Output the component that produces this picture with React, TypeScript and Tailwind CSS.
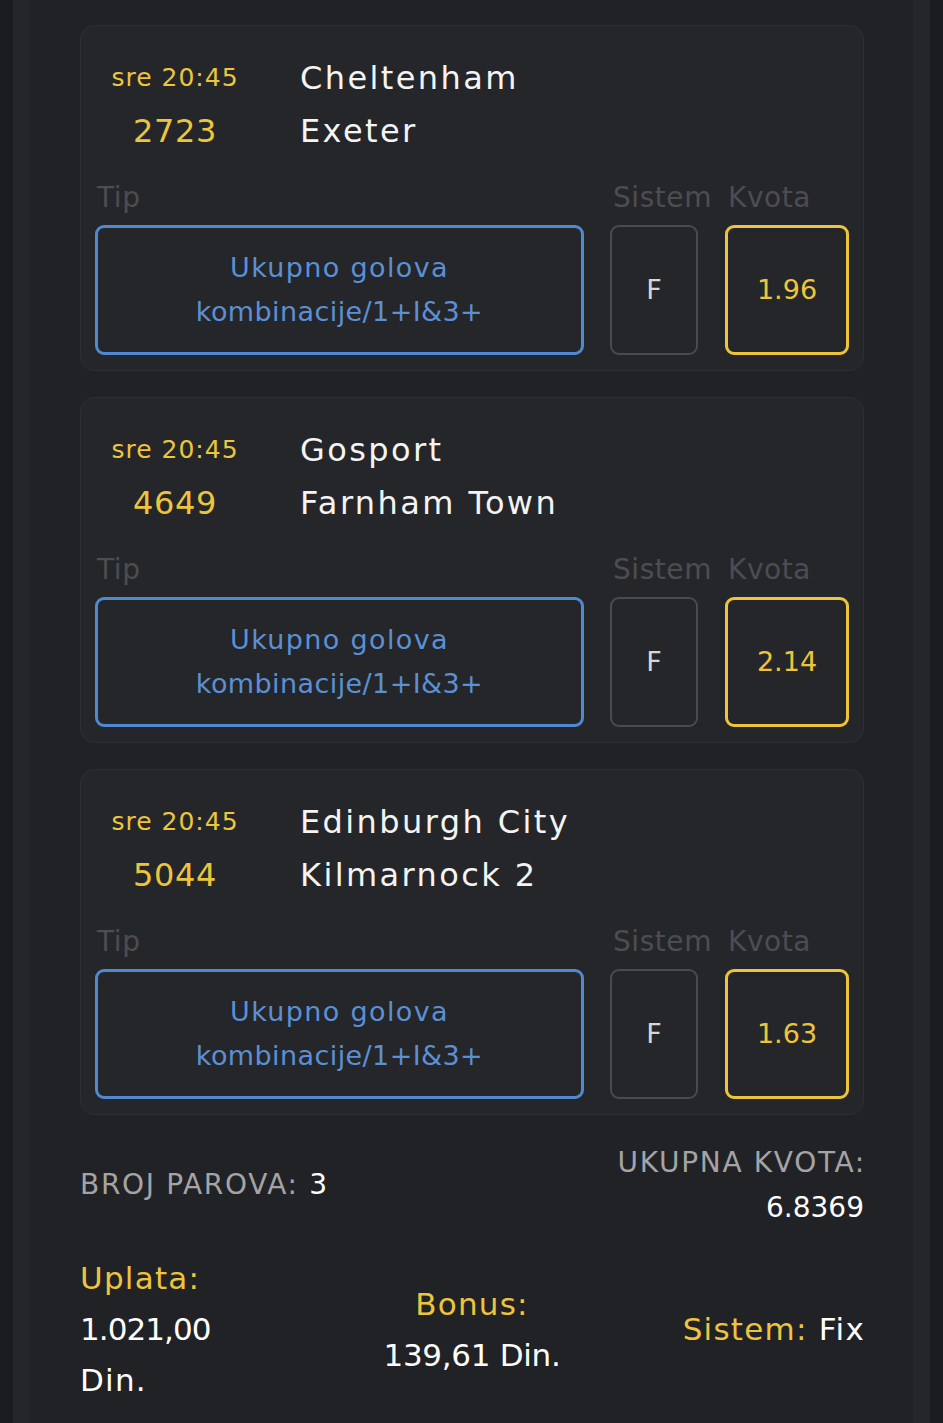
import React from "react";

const FONT = { fontFamily: '"DejaVu Sans", "Noto Sans", sans-serif' };

type Match = { time: string; code: string; home: string; away: string; odd: string };

const matches: Match[] = [
  { time: "sre 20:45", code: "2723", home: "Cheltenham", away: "Exeter", odd: "1.96" },
  { time: "sre 20:45", code: "4649", home: "Gosport", away: "Farnham Town", odd: "2.14" },
  { time: "sre 20:45", code: "5044", home: "Edinburgh City", away: "Kilmarnock 2", odd: "1.63" },
];

function Card({ m }: { m: Match }) {
  return (
    <div className="rounded-[14px] border border-[#2e2f32] bg-[#252629] px-[14px] pt-[25px] pb-[15px]">
      <div className="grid grid-cols-[160px_1fr] gap-x-[45px]">
        <div className="h-[53px] flex items-center justify-center text-[25px] text-[#ecc53d] tracking-[0.04em]">{m.time}</div>
        <div className="h-[53px] flex items-center text-[32px] text-[#f4f4f4] tracking-[0.075em]">{m.home}</div>
        <div className="h-[53px] flex items-center justify-center text-[32px] text-[#ecc53d] tracking-[0.02em]">{m.code}</div>
        <div className="h-[53px] flex items-center text-[32px] text-[#f4f4f4] tracking-[0.075em]">{m.away}</div>
      </div>
      <div className="mt-[22px] flex h-[38px] items-center text-[28px] text-[#4c4d51] tracking-[0.02em] whitespace-nowrap">
        <div className="w-[489px] pl-[2px]">Tip</div>
        <div className="ml-[26px] w-[88px] pl-[3px]">Sistem</div>
        <div className="ml-[27px] w-[124px] pl-[3px]">Kvota</div>
      </div>
      <div className="mt-[8px] flex h-[130px]">
        <div className="w-[489px] rounded-[9px] border-[3px] border-[#5089cf] flex flex-col items-center justify-center text-[27px] leading-[44px] text-[#5b90d4] tracking-[0.015em]">
          <div className="tracking-[0.05em]">Ukupno golova</div>
          <div>kombinacije/1+I&amp;3+</div>
        </div>
        <div className="ml-[26px] w-[88px] rounded-[9px] border-[2px] border-[#4a4b4f] flex items-center justify-center text-[27px] text-[#d6d6d6]">
          F
        </div>
        <div className="ml-[27px] w-[124px] rounded-[9px] border-[3px] border-[#eec53a] flex items-center justify-center text-[27px] text-[#eec53a]">
          {m.odd}
        </div>
      </div>
    </div>
  );
}

export default function App() {
  return (
    <div style={FONT} className="min-h-[1423px] bg-[#1b1c1f] px-[13px]">
      <div className="min-h-[1423px] border-x-[17px] border-[#25262a] bg-[#212225] pl-[50px] pr-[49px] pt-[25px]">
        <div className="flex flex-col gap-[26px]">
          {matches.map((m) => (
            <Card key={m.code} m={m} />
          ))}
        </div>
        <div className="mt-[25px] flex items-center justify-between text-[28px] tracking-[0.06em]">
          <div className="text-[#a4a4a6]">
            BROJ PAROVA: <span className="text-white">3</span>
          </div>
          <div className="text-right leading-[45px] -mr-[2px]">
            <div className="text-[#a4a4a6]">UKUPNA KVOTA:</div>
            <div className="text-white tracking-normal mr-[2px]">6.8369</div>
          </div>
        </div>
        <div className="mt-[23px] grid grid-cols-3 items-center text-[31px] leading-[51px] tracking-[0.04em]">
          <div>
            <div className="text-[#ecc53d]">Uplata:</div>
            <div className="text-white tracking-[-0.03em]">1.021,00</div>
            <div className="text-white">Din.</div>
          </div>
          <div className="text-center">
            <div className="text-[#ecc53d]">Bonus:</div>
            <div className="text-white tracking-[-0.01em]">139,61 Din.</div>
          </div>
          <div className="text-right -mr-[1px]">
            <span className="text-[#ecc53d]">Sistem:</span> <span className="text-white">Fix</span>
          </div>
        </div>
      </div>
    </div>
  );
}
